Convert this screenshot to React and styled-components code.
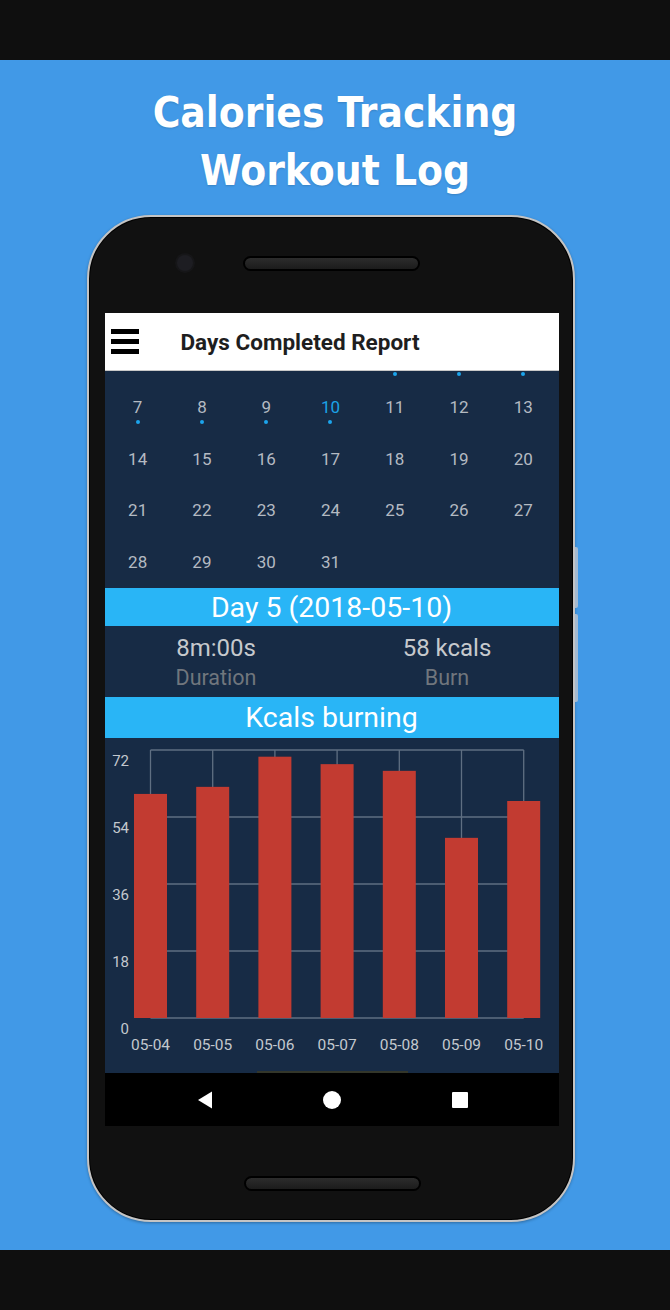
import React from "react";
import styled, { createGlobalStyle } from "styled-components";

const GlobalStyle = createGlobalStyle`
  html, body {
    margin: 0;
    padding: 0;
    background: #0f0f0f;
  }
  body {
    font-family: Roboto, "Noto Sans", sans-serif;
  }
`;

const weeks = [
  [7, 8, 9, 10, 11, 12, 13],
  [14, 15, 16, 17, 18, 19, 20],
  [21, 22, 23, 24, 25, 26, 27],
  [28, 29, 30, 31, null, null, null],
];
const doneDays = [7, 8, 9, 10];
const today = 10;

const bars = [
  { label: "05-04", value: 60.2 },
  { label: "05-05", value: 62.1 },
  { label: "05-06", value: 70.2 },
  { label: "05-07", value: 68.2 },
  { label: "05-08", value: 66.4 },
  { label: "05-09", value: 48.4 },
  { label: "05-10", value: 58.3 },
];

function App() {
  return (
    <>
      <GlobalStyle />
      <Page>
        <Band />
        <Stage>
          <Title>
            Calories Tracking
            <br />
            Workout Log
          </Title>
          <Phone>
            <SideButton $top={330} $height={61} />
            <SideButton $top={397} $height={88} />
            <TopBezel>
              <Camera />
              <Speaker />
            </TopBezel>
            <Screen>
              <AppBar>
                <Burger>
                  <span />
                  <span />
                  <span />
                </Burger>
                <AppTitle>Days Completed Report</AppTitle>
              </AppBar>
              <Calendar>
                <PeekRow>
                  {[0, 1, 2, 3, 4, 5, 6].map((i) => (
                    <PeekCell key={i}>{i >= 4 && <Dot />}</PeekCell>
                  ))}
                </PeekRow>
                {weeks.map((week, wi) => (
                  <Week key={wi}>
                    {week.map((d, di) => (
                      <DayCell key={di}>
                        {d && <DayNum $active={d === today}>{d}</DayNum>}
                        {d && doneDays.includes(d) && <Dot />}
                      </DayCell>
                    ))}
                  </Week>
                ))}
              </Calendar>
              <SectionHead $h={38}>Day 5 (2018-05-10)</SectionHead>
              <Stats>
                <Stat>
                  <StatValue>8m:00s</StatValue>
                  <StatLabel>Duration</StatLabel>
                </Stat>
                <Stat>
                  <StatValue>58 kcals</StatValue>
                  <StatLabel>Burn</StatLabel>
                </Stat>
              </Stats>
              <SectionHead $h={41}>Kcals burning</SectionHead>
              <Chart />
              <NavBar>
                <svg width="18" height="20" viewBox="0 0 18 20">
                  <path d="M16 1.5 L16 18.5 L2 10 Z" fill="#fff" />
                </svg>
                <svg width="20" height="20" viewBox="0 0 20 20">
                  <circle cx="10" cy="10" r="9" fill="#fff" />
                </svg>
                <svg width="18" height="18" viewBox="0 0 18 18">
                  <rect x="1" y="1" width="16" height="16" rx="1" fill="#fff" />
                </svg>
              </NavBar>
            </Screen>
            <BottomBezel>
              <Speaker />
            </BottomBezel>
          </Phone>
        </Stage>
        <Band />
      </Page>
    </>
  );
}

function Chart() {
  const x0 = 45.5;
  const step = 62.2;
  const top = 12;
  const bottom = 280;
  const scale = (bottom - top) / 72;
  const ticks = [0, 18, 36, 54, 72];
  const xEnd = x0 + step * 6;
  return (
    <ChartBox>
      <svg width="454" height="335" viewBox="0 0 454 335">
        {ticks.map((t) => {
          const y = bottom - t * scale;
          return (
            <g key={t}>
              <line x1={x0} x2={xEnd} y1={y} y2={y} stroke="#5f6f82" strokeWidth="1.3" />
              <text
                x="24"
                y={y + 16}
                textAnchor="end"
                fontSize="15"
                fill="#c3c8ce"
                fontFamily="Roboto, sans-serif"
              >
                {t}
              </text>
            </g>
          );
        })}
        {bars.map((b, i) => {
          const cx = x0 + step * i;
          return (
            <line key={"v" + i} x1={cx} x2={cx} y1={top} y2={bottom} stroke="#5f6f82" strokeWidth="1.3" />
          );
        })}
        {bars.map((b, i) => {
          const cx = x0 + step * i;
          const h = b.value * scale;
          return (
            <g key={b.label}>
              <rect x={cx - 16.5} y={bottom - h} width="33" height={h} fill="#c23b31" />
              <text
                x={cx}
                y="312"
                textAnchor="middle"
                fontSize="15.5"
                fill="#c3c8ce"
                fontFamily="Roboto, sans-serif"
              >
                {b.label}
              </text>
            </g>
          );
        })}
        <rect x="152" y="333" width="151" height="2" fill="#33362a" />
      </svg>
    </ChartBox>
  );
}

export default App;

const Page = styled.div`
  width: 670px;
  display: flex;
  flex-direction: column;
`;

const Band = styled.div`
  height: 60px;
  background: #0f0f0f;
`;

const Stage = styled.div`
  height: 1190px;
  background: #4199e7;
  display: flex;
  flex-direction: column;
  align-items: center;
  padding-top: 24px;
  box-sizing: border-box;
`;

const Title = styled.h1`
  margin: 0;
  color: #fff;
  font-family: "DejaVu Sans", sans-serif;
  font-stretch: condensed;
  font-weight: 700;
  font-size: 42px;
  line-height: 58px;
  text-align: center;
  text-shadow: 0 1px 2px rgba(0, 0, 0, 0.15);
`;

const Phone = styled.div`
  position: relative;
  margin-top: 15px;
  align-self: flex-start;
  margin-left: 87px;
  width: 488px;
  height: 1007px;
  box-sizing: border-box;
  border: 2px solid #c4c4c4;
  border-radius: 64px;
  background: #111;
  box-shadow: inset 0 0 0 1px #000, 0 1px 3px rgba(0, 0, 0, 0.3);
  display: flex;
  flex-direction: column;
  align-items: center;
`;

const SideButton = styled.div`
  position: absolute;
  right: -5px;
  top: ${(p) => p.$top}px;
  width: 3px;
  height: ${(p) => p.$height}px;
  background: #a3b9d0;
  border-radius: 0 2px 2px 0;
`;

const TopBezel = styled.div`
  height: 96px;
  width: 100%;
  display: flex;
  align-items: center;
  padding-left: 88px;
  padding-bottom: 4px;
  box-sizing: border-box;
  gap: 50px;
`;

const Camera = styled.div`
  width: 16px;
  height: 16px;
  border-radius: 50%;
  background: #1d1d22;
  box-shadow: 0 0 0 2px #161618;
`;

const Speaker = styled.div`
  width: 173px;
  height: 11px;
  border-radius: 8px;
  background: linear-gradient(#2c2c2c, #1c1c1c);
  border: 2px solid #000;
`;

const Screen = styled.div`
  width: 454px;
  height: 813px;
  margin-left: 1px;
  display: flex;
  flex-direction: column;
  background: #172b45;
`;

const AppBar = styled.div`
  height: 58px;
  background: #fff;
  display: flex;
  align-items: center;
  border-bottom: 1px solid #c8c8c8;
  box-sizing: border-box;
`;

const Burger = styled.div`
  width: 28px;
  margin-left: 6px;
  display: flex;
  flex-direction: column;
  gap: 5.5px;
  span {
    display: block;
    height: 4.5px;
    background: #000;
  }
`;

const AppTitle = styled.div`
  margin-left: 42px;
  font-size: 22.5px;
  font-weight: 700;
  color: #1e1e1e;
`;

const Calendar = styled.div`
  height: 217px;
  padding: 0 3px 0 1px;
  display: flex;
  flex-direction: column;
`;

const PeekRow = styled.div`
  height: 10px;
  display: grid;
  grid-template-columns: repeat(7, 1fr);
`;

const PeekCell = styled.div`
  display: flex;
  justify-content: center;
  align-items: flex-start;
  margin-top: -2px;
`;

const Week = styled.div`
  height: 52px;
  display: grid;
  grid-template-columns: repeat(7, 1fr);
`;

const DayCell = styled.div`
  display: flex;
  flex-direction: column;
  align-items: center;
  padding-top: 16px;
`;

const DayNum = styled.div`
  font-size: 17px;
  line-height: 20px;
  color: ${(p) => (p.$active ? "#1ba2e6" : "#b4bac2")};
`;

const Dot = styled.div`
  width: 4px;
  height: 4px;
  border-radius: 50%;
  background: #1ca5ec;
  margin-top: 3px;
`;

const SectionHead = styled.div`
  height: ${(p) => p.$h}px;
  background: #29b5f6;
  color: #fff;
  font-size: 28.5px;
  font-weight: 400;
  display: flex;
  align-items: center;
  justify-content: center;
`;

const Stats = styled.div`
  height: 71px;
  display: grid;
  grid-template-columns: 1fr 1fr;
  align-items: center;
  margin: 0 -4px;
`;

const Stat = styled.div`
  display: flex;
  flex-direction: column;
  align-items: center;
  padding-top: 3px;
`;

const StatValue = styled.div`
  font-size: 24px;
  line-height: 30px;
  color: #c6c9cd;
`;

const StatLabel = styled.div`
  font-size: 21.5px;
  line-height: 30px;
  color: #70767d;
`;

const ChartBox = styled.div`
  height: 335px;
  svg {
    display: block;
  }
`;

const NavBar = styled.div`
  height: 53px;
  background: #000;
  display: flex;
  align-items: center;
  justify-content: space-between;
  padding: 0 90px 0 91px;
`;

const BottomBezel = styled.div`
  flex: 1;
  width: 100%;
  display: flex;
  justify-content: center;
  padding-top: 50px;
  padding-left: 2px;
  box-sizing: border-box;
`;
